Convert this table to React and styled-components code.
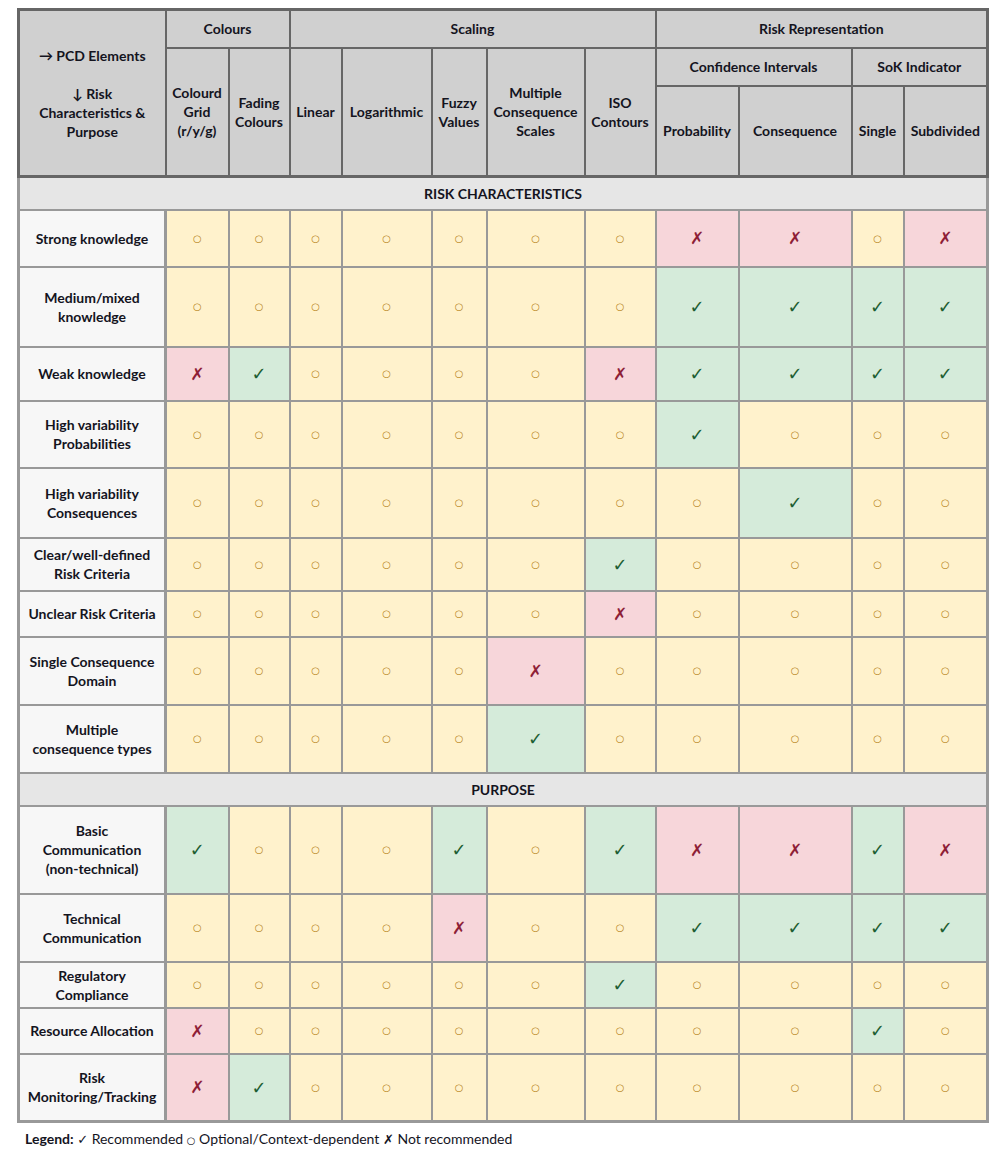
import React from "react";
import styled, { createGlobalStyle } from "styled-components";

const GlobalStyle = createGlobalStyle`
  body {
    margin: 0;
    background: #ffffff;
    font-family: Lato, "Open Sans", "Liberation Sans", sans-serif;
    color: #14141e;
  }
`;

const columns = [
  { key: "label", w: 147 },
  { key: "cg", w: 63 },
  { key: "fc", w: 61 },
  { key: "lin", w: 52 },
  { key: "log", w: 90 },
  { key: "fuz", w: 55 },
  { key: "mul", w: 98 },
  { key: "iso", w: 71 },
  { key: "prob", w: 83 },
  { key: "cons", w: 113 },
  { key: "single", w: 52 },
  { key: "sub", w: 84 },
];

// o = optional, y = recommended, x = not recommended
const sections = [
  {
    title: "RISK CHARACTERISTICS",
    rows: [
      { label: ["Strong knowledge"], h: 57, marks: "ooooooo xxox" },
      { label: ["Medium/mixed", "knowledge"], h: 80, marks: "ooooooo yyyy" },
      { label: ["Weak knowledge"], h: 54, marks: "xyoooox yyyy" },
      { label: ["High variability", "Probabilities"], h: 67, marks: "ooooooo yooo" },
      { label: ["High variability", "Consequences"], h: 70, marks: "ooooooo oyoo" },
      { label: ["Clear/well-defined", "Risk Criteria"], h: 53, marks: "ooooooy oooo" },
      { label: ["Unclear Risk Criteria"], h: 46, marks: "oooooox oooo" },
      { label: ["Single Consequence", "Domain"], h: 68, marks: "oooooxo oooo" },
      { label: ["Multiple", "consequence types"], h: 68, marks: "oooooyo oooo" },
    ],
  },
  {
    title: "PURPOSE",
    rows: [
      { label: ["Basic", "Communication", "(non-technical)"], h: 88, marks: "yoooyoy xxyx" },
      { label: ["Technical", "Communication"], h: 68, marks: "ooooxoo yyyy" },
      { label: ["Regulatory", "Compliance"], h: 46, marks: "ooooooy oooo" },
      { label: ["Resource Allocation"], h: 46, marks: "xoooooo ooyo" },
      { label: ["Risk", "Monitoring/Tracking"], h: 68, marks: "xyooooo oooo" },
    ],
  },
];

const markStyle = {
  o: { bg: "#fff2cc", color: "#b7841a", glyph: "○", size: 10 },
  y: { bg: "#d5ebda", color: "#1d5e32", glyph: "✓", size: 18 },
  x: { bg: "#f7d6da", color: "#8e2036", glyph: "✗", size: 17 },
};

const Page = styled.div`
  padding: 8px 10px 20px 17px;
`;

const Table = styled.table`
  border-collapse: collapse;
  table-layout: fixed;
  width: 971px;
  border: 3px solid #999999;
`;

const Col = styled.col`
  width: ${(p) => p.$w}px;
`;

const Row = styled.tr`
  height: ${(p) => p.$h}px;
`;

const HeadCell = styled.th`
  background: #d0d0d0;
  border: 2px solid #666666;
  ${(p) => p.$corner && "border-left-width: 3px;"}
  ${(p) => p.$top && "border-top-width: 3px;"}
  ${(p) => p.$bottom && "border-bottom-width: 3px;"}
  &:last-child {
    border-right-width: 3px;
  }
  font-size: 14px;
  font-weight: 700;
  line-height: 19px;
  text-align: center;
  vertical-align: middle;
  padding: 0 2px;
  color: #14141e;
`;

const SectionCell = styled.td`
  background: #e6e6e6;
  border: 2px solid #999999;
  font-size: 14px;
  font-weight: 700;
  text-align: center;
  vertical-align: middle;
  color: #14141e;
`;

const LabelCell = styled.td`
  background: #f7f7f7;
  border: 2px solid #999999;
  border-left-width: 3px;
  border-right-width: 3px;
  font-size: 14px;
  font-weight: 700;
  line-height: 19px;
  text-align: center;
  vertical-align: middle;
  padding: 0 2px;
  color: #14141e;
`;

const MarkCell = styled.td`
  background: ${(p) => markStyle[p.$mark].bg};
  color: ${(p) => markStyle[p.$mark].color};
  font-family: "DejaVu Sans", sans-serif;
  font-size: ${(p) => markStyle[p.$mark].size}px;
  border: 2px solid #999999;
  &:last-child {
    border-right-width: 3px;
  }
  text-align: center;
  vertical-align: middle;
  padding: 0;
`;

const Legend = styled.p`
  margin: 7px 0 0 8px;
  font-size: 14px;
  color: #14141e;
`;

const LegendTitle = styled.span`
  font-weight: 700;
`;

const Glyph = styled.span`
  font-family: "DejaVu Sans", sans-serif;
  font-size: ${(p) => p.$size || 13}px;
`;

const Lines = ({ lines }) =>
  lines.map((line, i) => (
    <React.Fragment key={i}>
      {i > 0 && <br />}
      {line}
    </React.Fragment>
  ));

export default function App() {
  return (
    <>
      <GlobalStyle />
      <Page>
        <Table>
          <colgroup>
            {columns.map((c) => (
              <Col key={c.key} $w={c.w} />
            ))}
          </colgroup>
          <thead>
            <Row $h={38}>
              <HeadCell rowSpan={3} $corner $top $bottom>
                → PCD Elements
                <br />
                <br />
                ↓ Risk
                <br />
                Characteristics &amp;
                <br />
                Purpose
              </HeadCell>
              <HeadCell colSpan={2} $top>Colours</HeadCell>
              <HeadCell colSpan={5} $top>Scaling</HeadCell>
              <HeadCell colSpan={4} $top>Risk Representation</HeadCell>
            </Row>
            <Row $h={38}>
              <HeadCell rowSpan={2} $bottom>
                <Lines lines={["Colourd", "Grid", "(r/y/g)"]} />
              </HeadCell>
              <HeadCell rowSpan={2} $bottom>
                <Lines lines={["Fading", "Colours"]} />
              </HeadCell>
              <HeadCell rowSpan={2} $bottom>Linear</HeadCell>
              <HeadCell rowSpan={2} $bottom>Logarithmic</HeadCell>
              <HeadCell rowSpan={2} $bottom>
                <Lines lines={["Fuzzy", "Values"]} />
              </HeadCell>
              <HeadCell rowSpan={2} $bottom>
                <Lines lines={["Multiple", "Consequence", "Scales"]} />
              </HeadCell>
              <HeadCell rowSpan={2} $bottom>
                <Lines lines={["ISO", "Contours"]} />
              </HeadCell>
              <HeadCell colSpan={2}>Confidence Intervals</HeadCell>
              <HeadCell colSpan={2}>SoK Indicator</HeadCell>
            </Row>
            <Row $h={91}>
              <HeadCell $bottom>Probability</HeadCell>
              <HeadCell $bottom>Consequence</HeadCell>
              <HeadCell $bottom>Single</HeadCell>
              <HeadCell $bottom>Subdivided</HeadCell>
            </Row>
          </thead>
          {sections.map((section) => (
            <tbody key={section.title}>
              <Row $h={33}>
                <SectionCell colSpan={12}>{section.title}</SectionCell>
              </Row>
              {section.rows.map((row) => (
                <Row key={row.label.join(" ")} $h={row.h}>
                  <LabelCell>
                    <Lines lines={row.label} />
                  </LabelCell>
                  {row.marks
                    .replace(" ", "")
                    .split("")
                    .map((m, i) => (
                      <MarkCell key={i} $mark={m}>
                        {markStyle[m].glyph}
                      </MarkCell>
                    ))}
                </Row>
              ))}
            </tbody>
          ))}
        </Table>
        <Legend>
          <LegendTitle>Legend:</LegendTitle> <Glyph>✓</Glyph> Recommended{" "}
          <Glyph $size={10}>○</Glyph> Optional/Context-dependent{" "}
          <Glyph>✗</Glyph> Not recommended
        </Legend>
      </Page>
    </>
  );
}
